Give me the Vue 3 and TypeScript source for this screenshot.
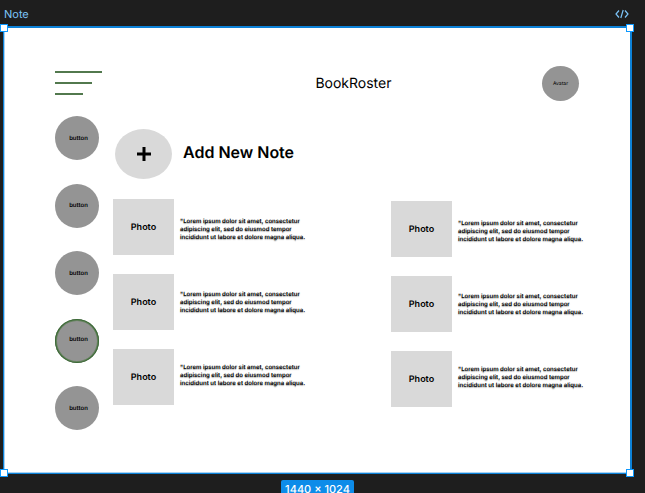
<script setup lang="ts">
const navItems: { id: number; active: boolean }[] = [
  { id: 1, active: false },
  { id: 2, active: false },
  { id: 3, active: false },
  { id: 4, active: true },
  { id: 5, active: false },
]

const noteLines: string[] = [
  '"Lorem ipsum dolor sit amet, consectetur',
  'adipiscing elit, sed do eiusmod tempor',
  'incididunt ut labore et dolore magna aliqua.',
]

const columns: number[][] = [
  [1, 2, 3],
  [4, 5, 6],
]

const corners: string[] = ['top-left', 'top-right', 'bottom-left', 'bottom-right']
</script>

<template>
  <div class="canvas">
    <div class="frame-bar">
      <span class="frame-name">Note</span>
      <svg class="code-icon" viewBox="0 0 14 10" aria-hidden="true">
        <path d="M4 1.5 1 5l3 3.5M10 1.5 13 5l-3 3.5M8.2 1 5.8 9" />
      </svg>
    </div>

    <div class="frame">
      <header class="header">
        <button class="menu" type="button" aria-label="Menu">
          <span class="line long"></span>
          <span class="line medium"></span>
          <span class="line short"></span>
        </button>
        <h1 class="title">BookRoster</h1>
        <button class="avatar" type="button">Avatar</button>
      </header>

      <div class="body">
        <nav class="sidebar">
          <button
            v-for="item in navItems"
            :key="item.id"
            type="button"
            class="nav-button"
            :class="{ active: item.active }"
          >button</button>
        </nav>

        <main class="content">
          <div class="add-row">
            <button class="add-button" type="button" aria-labelledby="add-label">
              <svg class="plus" viewBox="0 0 14 14" aria-hidden="true">
                <path d="M7 0v14M0 7h14" />
              </svg>
            </button>
            <h2 id="add-label" class="add-label">Add New Note</h2>
          </div>

          <div class="notes">
            <section v-for="(column, index) in columns" :key="index" class="note-column">
              <div class="photos">
                <div v-for="id in column" :key="id" class="photo">Photo</div>
              </div>
              <div class="captions">
                <p v-for="id in column" :key="id" class="caption">
                  <span v-for="line in noteLines" :key="line" class="caption-line">{{ line }}</span>
                </p>
              </div>
            </section>
          </div>
        </main>
      </div>

      <span v-for="corner in corners" :key="corner" class="handle" :class="corner"></span>
    </div>

    <footer class="size-bar">
      <span class="size-badge">1440 × 1024</span>
    </footer>
  </div>
</template>

<style>
body {
  margin: 0;
  background: #1e1e1e;
}
</style>

<style scoped>
.canvas {
  display: flex;
  flex-direction: column;
  box-sizing: border-box;
  height: 100vh;
  overflow: hidden;
  background: #1e1e1e;
  color: #000;
  font-family: Inter, "Liberation Sans", sans-serif;
  text-rendering: geometricPrecision;
}

button {
  padding: 0;
  border: 0;
  color: inherit;
  font-family: inherit;
  text-rendering: inherit;
  cursor: pointer;
}

.frame-bar {
  display: flex;
  flex: none;
  align-items: center;
  justify-content: space-between;
  box-sizing: border-box;
  height: 26px;
  padding: 2px 16px 0 4px;
}

.frame-name {
  color: #7cc4f8;
  font-size: 11px;
  line-height: 16px;
}

.code-icon {
  width: 14px;
  height: 10px;
  fill: none;
  stroke: #7cc4f8;
  stroke-width: 1.2;
}

.frame {
  position: relative;
  flex: 1;
  box-sizing: border-box;
  margin: 0 13px 0 3px;
  border: solid #0d82d8;
  border-width: 2px 2px 1px 1px;
  background: #fff;
  box-shadow: inset 1px -1px #a9d3f3;
}

.header {
  display: grid;
  grid-template-columns: 25fr auto 18fr;
  align-items: center;
  padding: 38px 51px 0;
}

.menu {
  display: flex;
  flex-direction: column;
  gap: 9px;
  width: 47px;
  padding-bottom: 2px;
  background: none;
}

.line {
  height: 2px;
  background: #52794e;
}

.long {
  width: 47px;
}

.medium {
  width: 37px;
}

.short {
  width: 28px;
}

.title {
  margin: 0;
  font-size: 14px;
  font-weight: 400;
  line-height: 20px;
}

.avatar {
  justify-self: end;
  width: 37px;
  height: 35px;
  border-radius: 50%;
  background: #949494;
  font-size: 5px;
}

.body {
  display: flex;
  gap: 14px;
  padding: 15px 44px 0 51px;
}

.sidebar {
  display: flex;
  flex: none;
  flex-direction: column;
  justify-content: space-between;
  height: 314px;
}

.nav-button {
  width: 44px;
  height: 44px;
  padding-left: 3px;
  border-radius: 50%;
  background: #949494;
  font-size: 6px;
  font-weight: 600;
}

.nav-button.active {
  padding-bottom: 3px;
  box-shadow: inset 0 0 0 1px #3d6b38, inset 0 0 0 2px #66835f;
}

.content {
  flex: 1;
  padding-top: 13px;
}

.add-row {
  display: flex;
  align-items: center;
  gap: 11px;
  padding-left: 2px;
}

.add-button {
  display: flex;
  align-items: center;
  justify-content: center;
  width: 57px;
  height: 50px;
  border-radius: 50%;
  background: #d9d9d9;
}

.plus {
  width: 14px;
  height: 14px;
  stroke: #000;
  stroke-width: 3;
}

.add-label {
  margin: 0;
  padding-bottom: 4px;
  font-size: 16px;
  font-weight: 600;
  line-height: 20px;
}

.notes {
  display: flex;
  justify-content: space-between;
  padding-top: 20px;
}

.note-column {
  display: flex;
  gap: 6px;
}

.note-column + .note-column {
  padding-top: 2px;
}

.photos {
  display: flex;
  flex-direction: column;
  gap: 19px;
}

.photo {
  display: flex;
  align-items: center;
  justify-content: center;
  width: 61px;
  height: 56px;
  background: #d9d9d9;
  font-size: 9px;
  font-weight: 600;
}

.captions {
  display: flex;
  flex-direction: column;
  gap: 49px;
  width: 128px;
  padding-top: 19px;
}

.caption {
  margin: 0;
  font-size: 6px;
  font-weight: 600;
  line-height: 8px;
  text-shadow: 0 1px 1px rgba(0, 0, 0, 0.35);
}

.caption-line {
  display: block;
  white-space: nowrap;
}

.handle {
  position: absolute;
  box-sizing: border-box;
  width: 8px;
  height: 8px;
  border: 1px solid #0d99ff;
  background: #fff;
}

.top-left {
  top: -4px;
  left: -4px;
}

.top-right {
  top: -4px;
  right: -4px;
}

.bottom-left {
  bottom: -4px;
  left: -4px;
}

.bottom-right {
  right: -4px;
  bottom: -4px;
}

.size-bar {
  display: flex;
  flex: none;
  justify-content: center;
  align-items: flex-start;
  box-sizing: border-box;
  height: 19px;
  padding: 6px 13px 0 3px;
}

.size-badge {
  padding: 0 4px;
  border-radius: 2px;
  background: #0d8ce9;
  color: #fff;
  font-size: 11px;
  font-weight: 500;
  line-height: 18px;
}
</style>
